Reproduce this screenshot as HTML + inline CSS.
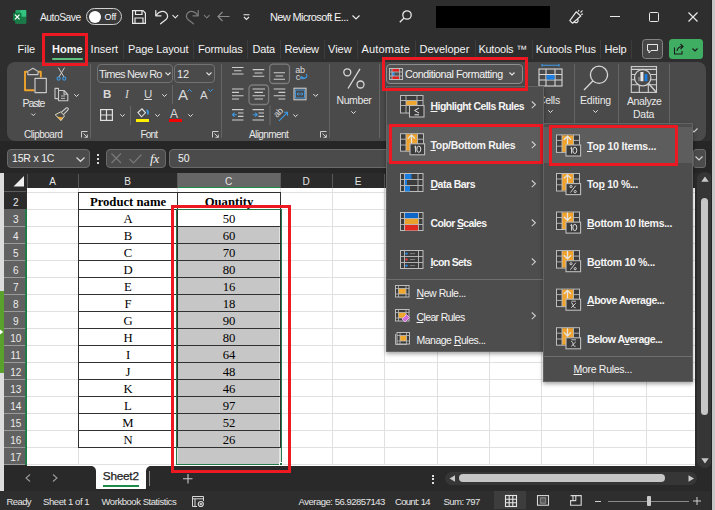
<!DOCTYPE html>
<html><head><meta charset="utf-8">
<style>
*{box-sizing:border-box;margin:0;padding:0}
html,body{width:715px;height:510px;overflow:hidden;background:#2e2e2e;font-family:"Liberation Sans",sans-serif;color:#fff}
.a{position:absolute}
.t{position:absolute;white-space:nowrap;line-height:1}
svg{position:absolute;overflow:visible}
</style></head><body>
<!-- title bar -->
<div id="title" class="a" style="left:0;top:0;width:715px;height:62px;background:#2e2e2e"></div>
<!-- ribbon panel -->
<div id="ribbon" class="a" style="left:7px;top:62px;width:699px;height:79px;background:#4a4a4a;border-radius:8px"></div>
<!-- formula bar -->
<div id="fbar" class="a" style="left:0;top:141px;width:715px;height:32px;background:#262626"></div>
<!-- left strip -->
<div class="a" style="left:0;top:173px;width:4px;height:318px;background:#dcdcdc"></div><div class="a" style="left:0;top:291px;width:4px;height:82px;background:#5aa02c"></div><svg style="left:0;top:329px" width="4" height="6" viewBox="0 0 4 6"><path d="M0 0.5 L3.2 3 L0 5.5Z" fill="#fff"/></svg>
<!-- column headers -->
<div class="a" style="left:4px;top:173px;width:691px;height:15px;background:#2b2b2b"></div>
<!-- grid -->
<div id="grid" class="a" style="left:27px;top:188px;width:668px;height:278px;background:#fff"></div>
<!-- row headers -->
<div class="a" style="left:4px;top:188px;width:22px;height:278px;background:#2b2b2b"></div>
<!-- sheet tab bar -->
<div class="a" style="left:4px;top:466px;width:707px;height:25px;background:#292929"></div><div class="a" style="left:0;top:509px;width:711px;height:1px;background:#4a4a4a"></div>
<!-- status bar -->
<div class="a" style="left:0;top:491px;width:711px;height:19px;background:#2e2e2e"></div>

<!-- TITLEBAR -->
<svg style="left:10px;top:8px" width="20" height="18" viewBox="10 8 20 18">
 <rect x="15.4" y="10" width="10.8" height="13.5" rx="1" fill="#21a366"/>
 <rect x="20.5" y="10" width="5.7" height="6.8" fill="#33c481"/>
 <rect x="15.4" y="16.8" width="10.8" height="6.7" fill="#1b7a48"/>
 <rect x="13" y="12.9" width="8.5" height="8.1" rx="0.8" fill="#107c41"/>
 <path d="M15 14.6 L19.5 19.4 M19.5 14.6 L15 19.4" stroke="#fff" stroke-width="1.3"/>
</svg>
<div class="t" style="left:40px;top:13px;font-size:10.3px;color:#f0f0f0;letter-spacing:-0.5px">AutoSave</div>
<div class="a" style="left:86px;top:8px;width:36px;height:17px;border:1.4px solid #d0d0d0;border-radius:8.5px;background:#3a3a3a"></div>
<div class="a" style="left:88.5px;top:10.8px;width:12px;height:12px;border-radius:6px;background:#fff"></div>
<div class="t" style="left:104.5px;top:12.5px;font-size:9px;color:#fff;letter-spacing:0px">Off</div>
<svg style="left:132px;top:10px" width="14" height="14" viewBox="0 0 14 14" fill="none" stroke="#e8e8e8" stroke-width="1.2">
 <path d="M0.6 0.6 H11 L13.4 3 V13.4 H0.6 Z"/><path d="M3.5 0.6 V4.5 H10 V0.6"/><path d="M3 13.4 V8 H11 V13.4"/>
</svg>
<svg style="left:0;top:0" width="230" height="30" viewBox="0 0 230 30" fill="none" stroke-width="1.25" stroke-linecap="round" stroke-linejoin="round">
 <path d="M155.8 10.6 V15.8 H161" stroke="#e6e6e6"/>
 <path d="M156.2 15.4 C158.6 11.6 163 10.3 165.8 12.6 C168.4 14.8 168 17.6 166 19.6 L160.6 23.8" stroke="#e6e6e6"/>
 <path d="M172.8 15.4 L175.3 17.9 L177.8 15.4" stroke="#e6e6e6" stroke-width="1.1"/>
 <path d="M198.2 10.6 V15.8 H193" stroke="#7c7c7c"/>
 <path d="M197.8 15.4 C195.4 11.6 191 10.3 188.2 12.6 C185.6 14.8 186 17.6 188 19.6 L193.4 23.8" stroke="#7c7c7c"/>
 <path d="M204.3 15.4 L206.8 17.9 L209.3 15.4" stroke="#7c7c7c" stroke-width="1.1"/>
</svg>
<svg style="left:217px;top:11px" width="13" height="11" viewBox="0 0 13 11" fill="none" stroke="#8a8a8a" stroke-width="1.2"><path d="M12.5 5.5 H1 M5.5 1 L1 5.5 L5.5 10"/></svg>
<svg style="left:243px;top:14px" width="7" height="7" viewBox="0 0 7 7" fill="none" stroke="#e8e8e8" stroke-width="1.1"><path d="M0.5 0.8 H6.5 M1 3 L3.5 5.5 L6 3"/></svg>
<div class="t" style="left:270px;top:12px;font-size:11px;color:#f4f4f4;letter-spacing:-0.62px">New Microsoft E...</div>
<svg style="left:352px;top:15px" width="8" height="5" viewBox="0 0 8 5" fill="none" stroke="#e8e8e8" stroke-width="1.2"><path d="M0.5 0.5 L4 4 L7.5 0.5"/></svg>
<svg style="left:399px;top:10px" width="13" height="13" viewBox="0 0 13 13" fill="none" stroke="#e8e8e8" stroke-width="1.3"><circle cx="8" cy="5" r="4.2"/><path d="M5 8 L0.8 12.2"/></svg>
<div class="a" style="left:436px;top:6px;width:114px;height:22px;background:#000"></div>
<svg style="left:560px;top:5px" width="30" height="25" viewBox="560 5 30 25" fill="none" stroke="#e6e6e6" stroke-width="1.2" stroke-linejoin="round" stroke-linecap="round">
 <path d="M569.8 20.6 L576.2 11.8 L580.8 16 L572.6 23.2 Z"/>
 <path d="M574.3 21.9 A1.9 1.9 0 1 0 577.6 19.2"/>
 <path d="M578.4 11.2 L578.9 10.4 M580.8 12.2 L582.2 10.9 M581.6 14.4 L582.6 14"/>
</svg>
<div class="a" style="left:610px;top:16px;width:10px;height:1.2px;background:#e8e8e8"></div>
<div class="a" style="left:649px;top:12px;width:10px;height:10px;border:1.2px solid #e8e8e8;border-radius:1.5px"></div>
<svg style="left:688px;top:12px" width="10" height="10" viewBox="0 0 10 10" fill="none" stroke="#e8e8e8" stroke-width="1.2"><path d="M0.5 0.5 L9.5 9.5 M9.5 0.5 L0.5 9.5"/></svg>

<!-- TABS -->
<div class="t" style="left:17.5px;top:44px;font-size:11px;font-weight:400;color:#f4f4f4;letter-spacing:0px">File</div>
<div class="t" style="left:52px;top:44px;font-size:11px;font-weight:700;color:#f4f4f4;letter-spacing:0px">Home</div>
<div class="t" style="left:90.6px;top:44px;font-size:11px;font-weight:400;color:#f4f4f4;letter-spacing:0px">Insert</div>
<div class="t" style="left:128px;top:44px;font-size:11px;font-weight:400;color:#f4f4f4;letter-spacing:-0.12px">Page Layout</div>
<div class="t" style="left:198px;top:44px;font-size:11px;font-weight:400;color:#f4f4f4;letter-spacing:-0.15px">Formulas</div>
<div class="t" style="left:252.5px;top:44px;font-size:11px;font-weight:400;color:#f4f4f4;letter-spacing:-0.2px">Data</div>
<div class="t" style="left:284.5px;top:44px;font-size:11px;font-weight:400;color:#f4f4f4;letter-spacing:-0.3px">Review</div>
<div class="t" style="left:328px;top:44px;font-size:11px;font-weight:400;color:#f4f4f4;letter-spacing:0px">View</div>
<div class="t" style="left:361.4px;top:44px;font-size:11px;font-weight:400;color:#f4f4f4;letter-spacing:0.2px">Automate</div>
<div class="t" style="left:419.6px;top:44px;font-size:11px;font-weight:400;color:#f4f4f4;letter-spacing:-0.05px">Developer</div>
<div class="t" style="left:478.4px;top:44px;font-size:11px;font-weight:400;color:#f4f4f4;letter-spacing:-0.25px">Kutools &#8482;</div>
<div class="t" style="left:535.7px;top:44px;font-size:11px;font-weight:400;color:#f4f4f4;letter-spacing:-0.08px">Kutools Plus</div>
<div class="t" style="left:604.5px;top:44px;font-size:11px;font-weight:400;color:#f4f4f4;letter-spacing:-0.15px">Help</div>
<div class="a" style="left:52px;top:57.5px;width:31px;height:2px;background:#5ec27f;border-radius:1px"></div>
<div class="a" style="left:123.0px;top:40px;width:1px;height:19px;background:#3c3c3c"></div>
<div class="a" style="left:193.0px;top:40px;width:1px;height:19px;background:#3c3c3c"></div>
<div class="a" style="left:247.0px;top:40px;width:1px;height:19px;background:#3c3c3c"></div>
<div class="a" style="left:279.5px;top:40px;width:1px;height:19px;background:#3c3c3c"></div>
<div class="a" style="left:324.2px;top:40px;width:1px;height:19px;background:#3c3c3c"></div>
<div class="a" style="left:357.0px;top:40px;width:1px;height:19px;background:#3c3c3c"></div>
<div class="a" style="left:415.2px;top:40px;width:1px;height:19px;background:#3c3c3c"></div>
<div class="a" style="left:474.5px;top:40px;width:1px;height:19px;background:#3c3c3c"></div>
<div class="a" style="left:531.5px;top:40px;width:1px;height:19px;background:#3c3c3c"></div>
<div class="a" style="left:599.5px;top:40px;width:1px;height:19px;background:#3c3c3c"></div>
<div class="a" style="left:630.5px;top:40px;width:1px;height:19px;background:#3c3c3c"></div>
<div class="a" style="left:642px;top:39px;width:21px;height:19.5px;border:1.2px solid #858585;border-radius:3.5px;background:#464646"></div>
<svg style="left:647px;top:44px" width="11" height="10" viewBox="0 0 11 10" fill="none" stroke="#e8e8e8" stroke-width="1"><path d="M0.5 0.5 H10.5 V6.5 H4 L2 9 V6.5 H0.5 Z"/></svg>
<div class="a" style="left:669px;top:39px;width:34px;height:19.8px;border-radius:3.5px;background:#3fae62"></div>
<svg style="left:674px;top:43px" width="12" height="12" viewBox="0 0 12 12" fill="none" stroke="#1b1b1b" stroke-width="1.1"><path d="M0.5 4.5 V11 H8 V8"/><path d="M3 8 C3.5 5 5.5 3.5 8.5 3.5 M6.5 1 L9 3.5 L6.5 6"/></svg>
<svg style="left:692px;top:48px" width="6" height="4" viewBox="0 0 6 4" fill="none" stroke="#1b1b1b" stroke-width="1.2"><path d="M0.5 0.5 L3 3 L5.5 0.5"/></svg>
<!-- red box Home -->
<div class="a" style="left:42px;top:33px;width:46px;height:33px;border:3px solid #ec1822"></div>


<!-- RIBBON CLIPBOARD -->
<svg style="left:0;top:60px" width="90" height="70" viewBox="0 60 90 70" fill="none" stroke-linejoin="round">
 <path d="M27.6 71.8 H25 V90.2 H34.5" stroke="#f0a22a" stroke-width="1.9"/>
 <path d="M38.2 71.8 H40.8 V77.5" stroke="#f0a22a" stroke-width="1.9"/>
 <path d="M27.8 74.6 V71.4 L32.9 68.2 L38 71.4 V74.6 Z" stroke="#c8c8c8" stroke-width="1.1"/>
 <rect x="35" y="78.3" width="11.3" height="14.3" stroke="#c8c8c8" stroke-width="1.2"/>
 <path d="M58.3 67.6 L64 77 M64.6 67.6 L58.9 77" stroke="#d0d0d0" stroke-width="1"/>
 <circle cx="58.6" cy="78.6" r="1.6" stroke="#3c9be8" stroke-width="1.1"/><circle cx="64.3" cy="78.6" r="1.6" stroke="#3c9be8" stroke-width="1.1"/>
 <path d="M58.5 90.5 V88.4 H55 V98.6 H58.5" stroke="#c8c8c8" stroke-width="1.1"/>
 <path d="M58.5 90.5 H64 L67.8 94.3 V100.8 H58.5 Z M64 90.5 V94.3 H67.8" stroke="#c8c8c8" stroke-width="1.1"/>
 <path d="M61 96 H65 M61 98.4 H65" stroke="#c8c8c8" stroke-width="0.9"/>
 <path d="M56.8 116.4 L63.2 117.6 L61 120.4 Z" fill="#f0a22a" stroke="none"/>
 <path d="M55.2 114.8 L60.6 112 L64.5 115.8 L61 120.6 Z" stroke="#e2dcc0" stroke-width="1"/>
 <path d="M61.2 112.4 L66.2 108 Q67.4 107.3 68.1 108.3 Q68.6 109.3 67.8 110.1 L63.4 114.6" stroke="#d0d0d0" stroke-width="1.1"/>
 <path d="M31.3 113.6 L33.3 115.6 L35.3 113.6" stroke="#e0e0e0" stroke-width="1"/>
</svg>
<div class="t" style="left:22.5px;top:98px;font-size:10.5px;color:#e8e8e8;letter-spacing:-1px">Paste</div>
<svg style="left:74px;top:94px" width="5" height="3" viewBox="0 0 5 3" fill="none" stroke="#e0e0e0" stroke-width="1"><path d="M0.3 0.3 L2.5 2.5 L4.7 0.3"/></svg>
<div class="t" style="left:24px;top:130px;font-size:10px;color:#e8e8e8;letter-spacing:-0.5px">Clipboard</div>
<svg style="left:81px;top:131px" width="7" height="7" viewBox="0 0 7 7" fill="none" stroke="#cfcfcf" stroke-width="1"><path d="M0.5 6.5 V0.5 H6.5 M2.5 2.5 L6.3 6.3 M3.5 6.3 H6.3 V3.5"/></svg>
<div class="a" style="left:90px;top:64px;width:1px;height:74px;background:#646464"></div>

<!-- RIBBON FONT -->
<div class="a" style="left:97px;top:64px;width:76px;height:19px;border:1px solid #727272;border-radius:4px"></div>
<div class="t" style="left:99px;top:69px;font-size:11px;color:#e8e8e8;letter-spacing:-0.75px">Times New Ro</div>
<svg style="left:165px;top:72px" width="6" height="4" viewBox="0 0 6 4" fill="none" stroke="#e0e0e0" stroke-width="1.1"><path d="M0.5 0.5 L3 3 L5.5 0.5"/></svg>
<div class="a" style="left:174px;top:64px;width:41px;height:19px;border:1px solid #727272;border-radius:4px"></div>
<div class="t" style="left:177px;top:69px;font-size:11px;color:#e8e8e8">12</div>
<svg style="left:206px;top:72px" width="6" height="4" viewBox="0 0 6 4" fill="none" stroke="#e0e0e0" stroke-width="1.1"><path d="M0.5 0.5 L3 3 L5.5 0.5"/></svg>
<div class="t" style="left:103px;top:89px;font-size:11.5px;font-weight:bold;color:#d8d8d8">B</div>
<div class="t" style="left:125px;top:89px;font-size:11.5px;font-style:italic;color:#d8d8d8;font-family:'Liberation Serif'">I</div>
<div class="t" style="left:144px;top:89px;font-size:11.5px;color:#d8d8d8">U</div>
<div class="a" style="left:144px;top:98.5px;width:8px;height:1.2px;background:#d8d8d8"></div>
<svg style="left:162px;top:94px" width="5" height="3" viewBox="0 0 5 3" fill="none" stroke="#e0e0e0" stroke-width="1"><path d="M0.3 0.3 L2.5 2.5 L4.7 0.3"/></svg>
<div class="a" style="left:172px;top:85px;width:1px;height:19px;background:#666"></div>
<div class="t" style="left:178px;top:87px;font-size:15px;color:#d8d8d8">A</div>
<svg style="left:187px;top:89px" width="5" height="3" viewBox="0 0 5 3" fill="none" stroke="#3c9be8" stroke-width="1"><path d="M0.3 2.7 L2.5 0.5 L4.7 2.7"/></svg>
<div class="t" style="left:200px;top:90px;font-size:11.5px;color:#d8d8d8">A</div>
<svg style="left:208px;top:89px" width="5" height="3" viewBox="0 0 5 3" fill="none" stroke="#3c9be8" stroke-width="1"><path d="M0.3 0.3 L2.5 2.5 L4.7 0.3"/></svg>
<svg style="left:100px;top:109px" width="13" height="12" viewBox="0 0 13 12" fill="none" stroke="#e0e0e0" stroke-width="1.2"><rect x="0.6" y="0.6" width="11.8" height="10.8"/><path d="M6.5 0.6 V11.4 M0.6 6 H12.4"/></svg>
<svg style="left:120px;top:114px" width="5" height="3" viewBox="0 0 5 3" fill="none" stroke="#e0e0e0" stroke-width="1"><path d="M0.3 0.3 L2.5 2.5 L4.7 0.3"/></svg>
<div class="a" style="left:130px;top:106px;width:1px;height:19px;background:#666"></div>
<svg style="left:137px;top:108px" width="12" height="10" viewBox="0 0 12 10" fill="none" stroke-width="1.1">
 <path d="M1 4.5 L5 0.8 L8.5 4.8 L4.5 8.8 Z" stroke="#e0e0e0"/><path d="M9.5 2 C11 3 11.5 5 10.5 6.5" stroke="#3c9be8" stroke-width="1.6"/>
</svg>
<div class="a" style="left:136px;top:118.5px;width:13px;height:3.5px;background:#ffef00"></div>
<svg style="left:155px;top:114px" width="5" height="3" viewBox="0 0 5 3" fill="none" stroke="#e0e0e0" stroke-width="1"><path d="M0.3 0.3 L2.5 2.5 L4.7 0.3"/></svg>
<div class="t" style="left:170px;top:108px;font-size:12px;color:#d8d8d8">A</div>
<div class="a" style="left:169px;top:118.5px;width:13px;height:3.5px;background:#f00000"></div>
<svg style="left:188px;top:114px" width="5" height="3" viewBox="0 0 5 3" fill="none" stroke="#e0e0e0" stroke-width="1"><path d="M0.3 0.3 L2.5 2.5 L4.7 0.3"/></svg>
<div class="t" style="left:140.5px;top:130px;font-size:10px;color:#e8e8e8;letter-spacing:-0.8px">Font</div>
<svg style="left:212px;top:131px" width="7" height="7" viewBox="0 0 7 7" fill="none" stroke="#cfcfcf" stroke-width="1"><path d="M0.5 6.5 V0.5 H6.5 M2.5 2.5 L6.3 6.3 M3.5 6.3 H6.3 V3.5"/></svg>
<div class="a" style="left:221px;top:64px;width:1px;height:74px;background:#646464"></div>


<!-- RIBBON ALIGNMENT -->
<svg style="left:0;top:0" width="715" height="145" viewBox="0 0 715 145" fill="none" stroke="#cdcdcd" stroke-width="1.1">
 <path d="M232 67.5 H243.5 M234 70.8 H241.5 M232 74 H243.5"/>
 <path d="M252.7 69.6 H264.3 M254.5 73 H262.5 M252.7 76.3 H264.3"/>
 <rect x="269.7" y="64.2" width="19.8" height="19.3" rx="3.5" stroke="#7c7c7c" stroke-width="1.3"/>
 <path d="M273.7 72.7 H285 M275.5 76 H283.2 M273.7 79.3 H285"/>
 <path d="M232 89 H243.5 M232 92.4 H239 M232 95.7 H243.5 M232 99 H239"/>
 <rect x="249" y="85" width="19.6" height="19.5" rx="3.5" stroke="#7c7c7c" stroke-width="1.3"/>
 <path d="M252.5 89 H265 M254.5 92.4 H263 M252.5 95.7 H265 M254.5 99 H263"/>
 <path d="M273.7 89 H285.3 M278.5 92.4 H285.3 M273.7 95.7 H285.3 M278.5 99 H285.3"/>
 <rect x="294" y="88.2" width="12" height="11.6" stroke="#d8d8d8" stroke-width="1"/>
 <rect x="295.5" y="90" width="9" height="8" stroke="#3c9be8" stroke-width="0.9"/>
 <path d="M297 94 H303 M298.5 92.5 L297 94 L298.5 95.5 M301.5 92.5 L303 94 L301.5 95.5" stroke="#3c9be8" stroke-width="0.9"/>
 <path d="M232 109.6 H243.5 M238 113 H243.5 M238 116.4 H243.5 M232 120 H243.5"/>
 <path d="M237 114.7 H232.5 M234.5 112.7 L232.5 114.7 L234.5 116.7" stroke="#3c9be8" stroke-width="1.1"/>
 <path d="M252.5 109.6 H264 M258.5 113 H264 M258.5 116.4 H264 M252.5 120 H264"/>
 <path d="M252.7 114.7 H257.2 M255.2 112.7 L257.2 114.7 L255.2 116.7" stroke="#3c9be8" stroke-width="1.1"/>
 <path d="M270 105.5 V125.3" stroke="#6a6a6a" stroke-width="1"/>
 <path d="M279 120.8 L287.5 112.3 M284 112.3 H287.5 V115.8" stroke="#3c9be8" stroke-width="1.1"/>
 <path d="M293.3 114.5 L295.5 116.7 L297.7 114.5" stroke="#e8e8e8" stroke-width="1"/>
 <path d="M313.3 94 L315.7 96.4 L318.1 94" stroke="#e8e8e8" stroke-width="1"/>
 <path d="M301 76.5 C301.5 79 304 79.5 306.5 77 C307.2 76 307 74.5 306 74 M301 76.5 L300.8 79.2 M301 76.5 L303.5 77.7" stroke="#3c9be8" stroke-width="1.1"/>
</svg>
<div class="t" style="left:295.3px;top:66px;font-size:9px;color:#d8d8d8;letter-spacing:-0.4px">ab</div>
<div class="t" style="left:295.8px;top:72.5px;font-size:9px;color:#d8d8d8">c</div>
<div class="t" style="left:272px;top:112.5px;font-size:9px;color:#d8d8d8;transform:rotate(-45deg);transform-origin:left top;letter-spacing:-0.4px">ab</div>
<div class="t" style="left:249px;top:130px;font-size:10px;color:#e8e8e8;letter-spacing:-0.6px">Alignment</div>
<svg style="left:320px;top:131px" width="7" height="7" viewBox="0 0 7 7" fill="none" stroke="#cfcfcf" stroke-width="1"><path d="M0.5 6.5 V0.5 H6.5 M2.5 2.5 L6.3 6.3 M3.5 6.3 H6.3 V3.5"/></svg>
<div class="a" style="left:329px;top:64px;width:1px;height:74px;background:#646464"></div>

<!-- NUMBER -->
<svg style="left:343px;top:68px" width="22" height="21" viewBox="0 0 22 21" fill="none" stroke="#d8d8d8" stroke-width="1.3">
 <circle cx="4.3" cy="4.3" r="3.5"/><circle cx="17.5" cy="16.5" r="3.5"/><path d="M17 0.8 L5 20.5"/>
</svg>
<div class="t" style="left:336.5px;top:95px;font-size:10.5px;color:#e8e8e8;letter-spacing:-0.4px">Number</div>
<svg style="left:351px;top:111px" width="5" height="3" viewBox="0 0 5 3" fill="none" stroke="#e0e0e0" stroke-width="1"><path d="M0.3 0.3 L2.5 2.5 L4.7 0.3"/></svg>
<div class="a" style="left:379px;top:64px;width:1px;height:74px;background:#646464"></div>

<!-- CELLS -->
<svg style="left:538px;top:64px" width="25" height="23" viewBox="0 0 25 23" fill="none" stroke-width="1.1">
 <path d="M4 1.3 H21 M4 0 V2.6 M21 0 V2.6" stroke="#3c9be8"/>
 <rect x="1" y="5" width="23" height="17" stroke="#d8d8d8"/>
 <path d="M1 10.5 H24 M1 16 H24 M8 5 V22 M17 5 V22" stroke="#d8d8d8"/>
 <rect x="8.5" y="11" width="8" height="4.5" fill="#1a7de0" stroke="none"/>
</svg>
<div class="t" style="left:538px;top:95px;font-size:10.5px;color:#e8e8e8;letter-spacing:-0.3px">Cells</div>
<svg style="left:548px;top:110px" width="5" height="3" viewBox="0 0 5 3" fill="none" stroke="#e0e0e0" stroke-width="1"><path d="M0.3 0.3 L2.5 2.5 L4.7 0.3"/></svg>
<div class="a" style="left:574px;top:64px;width:1px;height:74px;background:#646464"></div>
<!-- EDITING -->
<svg style="left:583px;top:65px" width="27" height="26" viewBox="0 0 27 26" fill="none" stroke="#d8d8d8" stroke-width="1.3">
 <circle cx="16" cy="9.8" r="8.6"/><path d="M9.8 16 L1 25"/>
</svg>
<div class="t" style="left:580px;top:95px;font-size:10.5px;color:#e8e8e8;letter-spacing:-0.15px">Editing</div>
<svg style="left:593px;top:110px" width="5" height="3" viewBox="0 0 5 3" fill="none" stroke="#e0e0e0" stroke-width="1"><path d="M0.3 0.3 L2.5 2.5 L4.7 0.3"/></svg>
<div class="a" style="left:618px;top:64px;width:1px;height:74px;background:#646464"></div>
<!-- ANALYZE -->
<svg style="left:620px;top:60px" width="45" height="40" viewBox="620 60 45 40" fill="none" stroke="#d0d0d0" stroke-width="1.1">
 <rect x="631.3" y="66.6" width="25.2" height="25.8"/>
 <path d="M631.3 69.4 H656.5 M631.3 84.8 H656.5 M639.3 84.8 V92.4 M648.3 84.8 V92.4 M631.3 74.5 H635 M631.3 79.8 H635 M650.5 74.5 H656.5 M650.5 79.8 H656.5"/>
 <circle cx="642.7" cy="77.7" r="8.2" fill="#4a4a4a" stroke-width="1.3"/>
 <path d="M648.6 83.6 L656.3 92.2" stroke-width="1.5"/>
 <rect x="640.4" y="72" width="3" height="9.2" fill="#e8e8e8" stroke="none"/>
 <rect x="644.6" y="74" width="2.8" height="7.2" fill="#1a7de0" stroke="none"/>
 <rect x="638" y="77" width="2" height="4.2" fill="#7a7a7a" stroke="none"/>
</svg>
<div class="t" style="left:627px;top:96px;font-size:10.5px;color:#e8e8e8;letter-spacing:-0.4px">Analyze</div>
<div class="t" style="left:633px;top:109px;font-size:10.5px;color:#e8e8e8;letter-spacing:-0.25px">Data</div>
<div class="a" style="left:669px;top:64px;width:1px;height:74px;background:#646464"></div>
<svg style="left:690px;top:127.5px" width="8" height="5" viewBox="0 0 8 5" fill="none" stroke="#d8d8d8" stroke-width="1.1"><path d="M0.5 0.5 L4 4 L7.5 0.5"/></svg>


<!-- FORMULA BAR -->
<div class="a" style="left:7px;top:149px;width:83px;height:19px;border:1px solid #6a6a6a;border-radius:4px;background:#4b4b4b"></div>
<div class="t" style="left:12px;top:153px;font-size:10.5px;color:#f2f2f2;letter-spacing:-0.2px">15R x 1C</div>
<svg style="left:76px;top:157px" width="9" height="5" viewBox="0 0 9 5" fill="none" stroke="#d8d8d8" stroke-width="1.2"><path d="M0.5 0.5 L4.5 4.3 L8.5 0.5"/></svg>
<div class="a" style="left:97px;top:154px;width:2px;height:2px;background:#d8d8d8"></div>
<div class="a" style="left:97px;top:158px;width:2px;height:2px;background:#d8d8d8"></div>
<div class="a" style="left:97px;top:162px;width:2px;height:2px;background:#d8d8d8"></div>
<div class="a" style="left:106px;top:149px;width:60px;height:19px;border:1px solid #6a6a6a;border-radius:4px;background:#4b4b4b"></div>
<svg style="left:111px;top:153px" width="11" height="11" viewBox="0 0 11 11" fill="none" stroke="#7a7a7a" stroke-width="1.1"><path d="M0.5 0.5 L10 10 M10 0.5 L0.5 10"/></svg>
<svg style="left:129px;top:154px" width="13" height="10" viewBox="0 0 13 10" fill="none" stroke="#7a7a7a" stroke-width="1.1"><path d="M0.5 5 L4.5 9 L12.5 0.5"/></svg>
<div class="t" style="left:150px;top:152px;font-size:13px;font-style:italic;color:#f2f2f2;font-family:'Liberation Serif'">fx</div>
<div class="a" style="left:169px;top:149px;width:525px;height:19px;border:1px solid #6a6a6a;border-radius:4px;background:#4b4b4b"></div>
<div class="t" style="left:178px;top:153px;font-size:10.5px;color:#f2f2f2">50</div>
<div class="a" style="left:693px;top:149px;width:13px;height:19px;border:1px solid #6a6a6a;border-radius:3px;background:#4b4b4b"></div>
<svg style="left:695px;top:156px" width="8" height="5" viewBox="0 0 8 5" fill="none" stroke="#d8d8d8" stroke-width="1.1"><path d="M0.5 0.5 L4 4 L7.5 0.5"/></svg>
<svg style="left:0;top:0" width="715" height="510" viewBox="0 0 715 510">
<path d="M78.5 188 V465" stroke="#e0e0e0" stroke-width="1"/>
<path d="M177.5 188 V465" stroke="#e0e0e0" stroke-width="1"/>
<path d="M280.5 188 V465" stroke="#e0e0e0" stroke-width="1"/>
<path d="M332.5 188 V465" stroke="#e0e0e0" stroke-width="1"/>
<path d="M384.5 188 V465" stroke="#e0e0e0" stroke-width="1"/>
<path d="M437.5 188 V465" stroke="#e0e0e0" stroke-width="1"/>
<path d="M489.5 188 V465" stroke="#e0e0e0" stroke-width="1"/>
<path d="M541.5 188 V465" stroke="#e0e0e0" stroke-width="1"/>
<path d="M593.5 188 V465" stroke="#e0e0e0" stroke-width="1"/>
<path d="M646.5 188 V465" stroke="#e0e0e0" stroke-width="1"/>
<path d="M698.5 188 V465" stroke="#e0e0e0" stroke-width="1"/>
<path d="M27 192.5 H695" stroke="#e0e0e0" stroke-width="1"/>
<path d="M27 209.5 H695" stroke="#e0e0e0" stroke-width="1"/>
<path d="M27 226.5 H695" stroke="#e0e0e0" stroke-width="1"/>
<path d="M27 243.5 H695" stroke="#e0e0e0" stroke-width="1"/>
<path d="M27 260.5 H695" stroke="#e0e0e0" stroke-width="1"/>
<path d="M27 277.5 H695" stroke="#e0e0e0" stroke-width="1"/>
<path d="M27 294.5 H695" stroke="#e0e0e0" stroke-width="1"/>
<path d="M27 311.5 H695" stroke="#e0e0e0" stroke-width="1"/>
<path d="M27 328.5 H695" stroke="#e0e0e0" stroke-width="1"/>
<path d="M27 345.5 H695" stroke="#e0e0e0" stroke-width="1"/>
<path d="M27 362.5 H695" stroke="#e0e0e0" stroke-width="1"/>
<path d="M27 379.5 H695" stroke="#e0e0e0" stroke-width="1"/>
<path d="M27 396.5 H695" stroke="#e0e0e0" stroke-width="1"/>
<path d="M27 413.5 H695" stroke="#e0e0e0" stroke-width="1"/>
<path d="M27 430.5 H695" stroke="#e0e0e0" stroke-width="1"/>
<path d="M27 447.5 H695" stroke="#e0e0e0" stroke-width="1"/>
<path d="M27 464.5 H695" stroke="#e0e0e0" stroke-width="1"/>
<rect x="178" y="226" width="101.5" height="238" fill="#c6c6c6"/>
<path d="M78 192.5 H281" stroke="#303030" stroke-width="1"/>
<path d="M78 209.5 H281" stroke="#303030" stroke-width="1"/>
<path d="M78 226.5 H281" stroke="#303030" stroke-width="1"/>
<path d="M78 243.5 H281" stroke="#303030" stroke-width="1"/>
<path d="M78 260.5 H281" stroke="#303030" stroke-width="1"/>
<path d="M78 277.5 H281" stroke="#303030" stroke-width="1"/>
<path d="M78 294.5 H281" stroke="#303030" stroke-width="1"/>
<path d="M78 311.5 H281" stroke="#303030" stroke-width="1"/>
<path d="M78 328.5 H281" stroke="#303030" stroke-width="1"/>
<path d="M78 345.5 H281" stroke="#303030" stroke-width="1"/>
<path d="M78 362.5 H281" stroke="#303030" stroke-width="1"/>
<path d="M78 379.5 H281" stroke="#303030" stroke-width="1"/>
<path d="M78 396.5 H281" stroke="#303030" stroke-width="1"/>
<path d="M78 413.5 H281" stroke="#303030" stroke-width="1"/>
<path d="M78 430.5 H281" stroke="#303030" stroke-width="1"/>
<path d="M78 447.5 H281" stroke="#303030" stroke-width="1"/>
<path d="M78.5 192 V448 M177.5 192 V448 M280.5 192 V448" stroke="#303030" stroke-width="1"/>
</svg>
<!-- HEADERS/CELLS -->
<div class="a" style="left:177px;top:173px;width:104px;height:15px;background:#666666"></div>
<div class="a" style="left:177px;top:187px;width:104px;height:1px;background:#1e8a4c"></div>
<div class="a" style="left:27px;top:174px;width:1px;height:14px;background:#585858"></div>
<div class="t" style="left:27px;top:177px;width:51px;text-align:center;font-size:10px;color:#e6e6e6">A</div>
<div class="a" style="left:78px;top:174px;width:1px;height:14px;background:#585858"></div>
<div class="t" style="left:78px;top:177px;width:99px;text-align:center;font-size:10px;color:#e6e6e6">B</div>
<div class="a" style="left:177px;top:174px;width:1px;height:14px;background:#585858"></div>
<div class="t" style="left:177px;top:177px;width:103px;text-align:center;font-size:10px;color:#e6e6e6">C</div>
<div class="a" style="left:280px;top:174px;width:1px;height:14px;background:#585858"></div>
<div class="t" style="left:280px;top:177px;width:52px;text-align:center;font-size:10px;color:#e6e6e6">D</div>
<div class="a" style="left:332px;top:174px;width:1px;height:14px;background:#585858"></div>
<div class="t" style="left:332px;top:177px;width:52px;text-align:center;font-size:10px;color:#e6e6e6">E</div>
<div class="a" style="left:384px;top:174px;width:1px;height:14px;background:#585858"></div>
<div class="t" style="left:384px;top:177px;width:53px;text-align:center;font-size:10px;color:#e6e6e6">F</div>
<div class="a" style="left:437px;top:174px;width:1px;height:14px;background:#585858"></div>
<div class="t" style="left:437px;top:177px;width:52px;text-align:center;font-size:10px;color:#e6e6e6">G</div>
<div class="a" style="left:489px;top:174px;width:1px;height:14px;background:#585858"></div>
<div class="t" style="left:489px;top:177px;width:52px;text-align:center;font-size:10px;color:#e6e6e6">H</div>
<div class="a" style="left:541px;top:174px;width:1px;height:14px;background:#585858"></div>
<div class="t" style="left:541px;top:177px;width:52px;text-align:center;font-size:10px;color:#e6e6e6">I</div>
<div class="a" style="left:593px;top:174px;width:1px;height:14px;background:#585858"></div>
<div class="t" style="left:593px;top:177px;width:53px;text-align:center;font-size:10px;color:#e6e6e6">J</div>
<div class="a" style="left:646px;top:174px;width:1px;height:14px;background:#585858"></div>
<div class="t" style="left:646px;top:177px;width:52px;text-align:center;font-size:10px;color:#e6e6e6">K</div>
<svg style="left:13px;top:176px" width="12" height="11" viewBox="0 0 12 11"><path d="M11 0 V10.5 H0.5 Z" fill="#f0f0f0"/></svg>
<div class="a" style="left:4px;top:191px;width:22px;height:1px;background:#5d5d5d"></div>
<div class="a" style="left:4px;top:192px;width:22px;height:17px;background:#2b2b2b"></div>
<div class="t" style="left:4.7px;top:198px;width:22px;text-align:center;font-size:10px;color:#ececec">2</div>
<div class="a" style="left:4px;top:209px;width:22px;height:17px;background:#616161"></div>
<div class="t" style="left:4.7px;top:215px;width:22px;text-align:center;font-size:10px;color:#ececec">3</div>
<div class="a" style="left:4px;top:226px;width:22px;height:17px;background:#616161"></div>
<div class="t" style="left:4.7px;top:232px;width:22px;text-align:center;font-size:10px;color:#ececec">4</div>
<div class="a" style="left:4px;top:243px;width:22px;height:17px;background:#616161"></div>
<div class="t" style="left:4.7px;top:249px;width:22px;text-align:center;font-size:10px;color:#ececec">5</div>
<div class="a" style="left:4px;top:260px;width:22px;height:17px;background:#616161"></div>
<div class="t" style="left:4.7px;top:266px;width:22px;text-align:center;font-size:10px;color:#ececec">6</div>
<div class="a" style="left:4px;top:277px;width:22px;height:17px;background:#616161"></div>
<div class="t" style="left:4.7px;top:283px;width:22px;text-align:center;font-size:10px;color:#ececec">7</div>
<div class="a" style="left:4px;top:294px;width:22px;height:17px;background:#616161"></div>
<div class="t" style="left:4.7px;top:300px;width:22px;text-align:center;font-size:10px;color:#ececec">8</div>
<div class="a" style="left:4px;top:311px;width:22px;height:17px;background:#616161"></div>
<div class="t" style="left:4.7px;top:317px;width:22px;text-align:center;font-size:10px;color:#ececec">9</div>
<div class="a" style="left:4px;top:328px;width:22px;height:17px;background:#616161"></div>
<div class="t" style="left:4.7px;top:334px;width:22px;text-align:center;font-size:10px;color:#ececec">10</div>
<div class="a" style="left:4px;top:345px;width:22px;height:17px;background:#616161"></div>
<div class="t" style="left:4.7px;top:351px;width:22px;text-align:center;font-size:10px;color:#ececec">11</div>
<div class="a" style="left:4px;top:362px;width:22px;height:17px;background:#616161"></div>
<div class="t" style="left:4.7px;top:368px;width:22px;text-align:center;font-size:10px;color:#ececec">12</div>
<div class="a" style="left:4px;top:379px;width:22px;height:17px;background:#616161"></div>
<div class="t" style="left:4.7px;top:385px;width:22px;text-align:center;font-size:10px;color:#ececec">13</div>
<div class="a" style="left:4px;top:396px;width:22px;height:17px;background:#616161"></div>
<div class="t" style="left:4.7px;top:402px;width:22px;text-align:center;font-size:10px;color:#ececec">14</div>
<div class="a" style="left:4px;top:413px;width:22px;height:17px;background:#616161"></div>
<div class="t" style="left:4.7px;top:419px;width:22px;text-align:center;font-size:10px;color:#ececec">15</div>
<div class="a" style="left:4px;top:430px;width:22px;height:17px;background:#616161"></div>
<div class="t" style="left:4.7px;top:436px;width:22px;text-align:center;font-size:10px;color:#ececec">16</div>
<div class="a" style="left:4px;top:447px;width:22px;height:17px;background:#616161"></div>
<div class="t" style="left:4.7px;top:453px;width:22px;text-align:center;font-size:10px;color:#ececec">17</div>
<div class="a" style="left:4px;top:226px;width:22px;height:1px;background:#9a9a9a"></div>
<div class="a" style="left:4px;top:243px;width:22px;height:1px;background:#9a9a9a"></div>
<div class="a" style="left:4px;top:260px;width:22px;height:1px;background:#9a9a9a"></div>
<div class="a" style="left:4px;top:277px;width:22px;height:1px;background:#9a9a9a"></div>
<div class="a" style="left:4px;top:294px;width:22px;height:1px;background:#9a9a9a"></div>
<div class="a" style="left:4px;top:311px;width:22px;height:1px;background:#9a9a9a"></div>
<div class="a" style="left:4px;top:328px;width:22px;height:1px;background:#9a9a9a"></div>
<div class="a" style="left:4px;top:345px;width:22px;height:1px;background:#9a9a9a"></div>
<div class="a" style="left:4px;top:362px;width:22px;height:1px;background:#9a9a9a"></div>
<div class="a" style="left:4px;top:379px;width:22px;height:1px;background:#9a9a9a"></div>
<div class="a" style="left:4px;top:396px;width:22px;height:1px;background:#9a9a9a"></div>
<div class="a" style="left:4px;top:413px;width:22px;height:1px;background:#9a9a9a"></div>
<div class="a" style="left:4px;top:430px;width:22px;height:1px;background:#9a9a9a"></div>
<div class="a" style="left:4px;top:447px;width:22px;height:1px;background:#9a9a9a"></div>
<div class="a" style="left:4px;top:464px;width:22px;height:1px;background:#9a9a9a"></div>
<div class="a" style="left:25.3px;top:209px;width:1.7px;height:256px;background:#217a48"></div>
<div class="t" style="left:78px;top:196px;width:100px;text-align:center;font-family:'Liberation Serif';font-weight:bold;font-size:12.7px;color:#000">Product name</div>
<div class="t" style="left:177px;top:196px;width:104px;text-align:center;font-family:'Liberation Serif';font-weight:bold;font-size:12.7px;color:#000">Quantity</div>
<div class="t" style="left:78px;top:213px;width:100px;text-align:center;font-family:'Liberation Serif';font-size:12.7px;color:#000">A</div>
<div class="t" style="left:177px;top:213px;width:104px;text-align:center;font-family:'Liberation Serif';font-size:12.7px;color:#000">50</div>
<div class="t" style="left:78px;top:230px;width:100px;text-align:center;font-family:'Liberation Serif';font-size:12.7px;color:#000">B</div>
<div class="t" style="left:177px;top:230px;width:104px;text-align:center;font-family:'Liberation Serif';font-size:12.7px;color:#000">60</div>
<div class="t" style="left:78px;top:247px;width:100px;text-align:center;font-family:'Liberation Serif';font-size:12.7px;color:#000">C</div>
<div class="t" style="left:177px;top:247px;width:104px;text-align:center;font-family:'Liberation Serif';font-size:12.7px;color:#000">70</div>
<div class="t" style="left:78px;top:264px;width:100px;text-align:center;font-family:'Liberation Serif';font-size:12.7px;color:#000">D</div>
<div class="t" style="left:177px;top:264px;width:104px;text-align:center;font-family:'Liberation Serif';font-size:12.7px;color:#000">80</div>
<div class="t" style="left:78px;top:281px;width:100px;text-align:center;font-family:'Liberation Serif';font-size:12.7px;color:#000">E</div>
<div class="t" style="left:177px;top:281px;width:104px;text-align:center;font-family:'Liberation Serif';font-size:12.7px;color:#000">16</div>
<div class="t" style="left:78px;top:298px;width:100px;text-align:center;font-family:'Liberation Serif';font-size:12.7px;color:#000">F</div>
<div class="t" style="left:177px;top:298px;width:104px;text-align:center;font-family:'Liberation Serif';font-size:12.7px;color:#000">18</div>
<div class="t" style="left:78px;top:315px;width:100px;text-align:center;font-family:'Liberation Serif';font-size:12.7px;color:#000">G</div>
<div class="t" style="left:177px;top:315px;width:104px;text-align:center;font-family:'Liberation Serif';font-size:12.7px;color:#000">90</div>
<div class="t" style="left:78px;top:332px;width:100px;text-align:center;font-family:'Liberation Serif';font-size:12.7px;color:#000">H</div>
<div class="t" style="left:177px;top:332px;width:104px;text-align:center;font-family:'Liberation Serif';font-size:12.7px;color:#000">80</div>
<div class="t" style="left:78px;top:349px;width:100px;text-align:center;font-family:'Liberation Serif';font-size:12.7px;color:#000">I</div>
<div class="t" style="left:177px;top:349px;width:104px;text-align:center;font-family:'Liberation Serif';font-size:12.7px;color:#000">64</div>
<div class="t" style="left:78px;top:366px;width:100px;text-align:center;font-family:'Liberation Serif';font-size:12.7px;color:#000">J</div>
<div class="t" style="left:177px;top:366px;width:104px;text-align:center;font-family:'Liberation Serif';font-size:12.7px;color:#000">48</div>
<div class="t" style="left:78px;top:383px;width:100px;text-align:center;font-family:'Liberation Serif';font-size:12.7px;color:#000">K</div>
<div class="t" style="left:177px;top:383px;width:104px;text-align:center;font-family:'Liberation Serif';font-size:12.7px;color:#000">46</div>
<div class="t" style="left:78px;top:400px;width:100px;text-align:center;font-family:'Liberation Serif';font-size:12.7px;color:#000">L</div>
<div class="t" style="left:177px;top:400px;width:104px;text-align:center;font-family:'Liberation Serif';font-size:12.7px;color:#000">97</div>
<div class="t" style="left:78px;top:417px;width:100px;text-align:center;font-family:'Liberation Serif';font-size:12.7px;color:#000">M</div>
<div class="t" style="left:177px;top:417px;width:104px;text-align:center;font-family:'Liberation Serif';font-size:12.7px;color:#000">52</div>
<div class="t" style="left:78px;top:434px;width:100px;text-align:center;font-family:'Liberation Serif';font-size:12.7px;color:#000">N</div>
<div class="t" style="left:177px;top:434px;width:104px;text-align:center;font-family:'Liberation Serif';font-size:12.7px;color:#000">26</div>
<div class="a" style="left:176px;top:208.5px;width:106px;height:256px;border:1.7px solid #217a48"></div>
<div class="a" style="left:279px;top:462px;width:4px;height:4px;background:#1e7a45;border:1px solid #fff"></div>
<div class="a" style="left:171px;top:205.3px;width:120px;height:267.4px;border:3.3px solid #ec1822"></div>
<!-- BOTTOM -->
<div class="a" style="left:695px;top:173px;width:16px;height:293px;background:#2b2b2b"></div>
<div class="a" style="left:696.5px;top:172px;width:15px;height:296px;background:#363636;border-radius:7.5px"></div>
<svg style="left:700.5px;top:176px" width="8" height="6" viewBox="0 0 8 6"><path d="M0.3 5.7 L4 0.5 L7.7 5.7Z" fill="#c8c8c8"/></svg>
<div class="a" style="left:700.7px;top:198px;width:7.5px;height:217px;background:#c6c6c6;border-radius:4px"></div>
<svg style="left:700.5px;top:458px" width="8" height="6" viewBox="0 0 8 6"><path d="M0.3 0.3 L4 5.5 L7.7 0.3Z" fill="#c8c8c8"/></svg>
<div class="a" style="left:92px;top:466px;width:58px;height:23px;background:#fff;border-radius:0 0 5px 5px"></div>
<div class="a" style="left:88px;top:466px;width:8px;height:23px;background:#292929;border-radius:0 5px 0 0"></div>
<div class="a" style="left:145.5px;top:466px;width:8px;height:23px;background:#292929;border-radius:5px 0 0 0"></div>
<div class="t" style="left:96px;top:470.5px;width:49.5px;text-align:center;font-size:11.8px;color:#1e1e1e;letter-spacing:-0.25px;-webkit-text-stroke:0.25px #1e1e1e">Sheet2</div>
<div class="a" style="left:103px;top:484.8px;width:36px;height:1.8px;background:#1e8a4c"></div>
<div class="a" style="left:148.5px;top:471px;width:1px;height:15px;background:#8a8a8a"></div>
<svg style="left:183px;top:473.5px" width="10" height="10" viewBox="0 0 10 10" fill="none" stroke="#c8c8c8" stroke-width="1.1"><path d="M5 0 V9.5 M0 4.7 H9.5"/></svg>
<svg style="left:25px;top:474px" width="6" height="8" viewBox="0 0 6 8" fill="none" stroke="#9a9a9a" stroke-width="1.1"><path d="M5 0.5 L1 4 L5 7.5"/></svg>
<svg style="left:52px;top:474px" width="6" height="8" viewBox="0 0 6 8" fill="none" stroke="#9a9a9a" stroke-width="1.1"><path d="M1 0.5 L5 4 L1 7.5"/></svg>
<div class="a" style="left:431.5px;top:474.5px;width:2px;height:2px;background:#e0e0e0"></div>
<div class="a" style="left:431.5px;top:478px;width:2px;height:2px;background:#e0e0e0"></div>
<div class="a" style="left:431.5px;top:481.5px;width:2px;height:2px;background:#e0e0e0"></div>
<div class="a" style="left:445px;top:472px;width:252px;height:13px;background:#363636;border-radius:6.5px"></div>
<svg style="left:448.5px;top:475px" width="7" height="7" viewBox="0 0 7 7"><path d="M6 0.3 V6.7 L0.5 3.5Z" fill="#c8c8c8"/></svg>
<svg style="left:687.5px;top:475px" width="7" height="7" viewBox="0 0 7 7"><path d="M0.5 0.3 V6.7 L6 3.5Z" fill="#c8c8c8"/></svg>
<div class="a" style="left:458.5px;top:474.3px;width:206px;height:7.6px;background:#c6c6c6;border-radius:4px"></div>
<div class="t" style="left:6.5px;top:497px;font-size:9.5px;color:#e6e6e6;letter-spacing:-0.6px">Ready</div>
<div class="t" style="left:43px;top:497px;font-size:9.5px;color:#e6e6e6;letter-spacing:-0.42px">Sheet 1 of 1</div>
<div class="t" style="left:101.5px;top:497px;font-size:9.5px;color:#e6e6e6;letter-spacing:-0.45px">Workbook Statistics</div>
<svg style="left:192px;top:496px" width="13" height="11" viewBox="0 0 13 11" fill="none" stroke="#d8d8d8" stroke-width="1">
 <path d="M5 10.5 H0.5 V0.5 H11.5 V5"/><path d="M0.5 2.8 H11.5 M3 2.8 V10.5"/><circle cx="8.8" cy="8" r="2.5" stroke-width="1.2"/><circle cx="8.8" cy="8" r="0.8" fill="#d8d8d8"/>
</svg>
<div class="t" style="left:298.5px;top:497px;font-size:9.5px;color:#e6e6e6;letter-spacing:-0.48px">Average: 56.92857143</div>
<div class="t" style="left:395px;top:497px;font-size:9.5px;color:#e6e6e6;letter-spacing:-0.7px">Count: 14</div>
<div class="t" style="left:443.5px;top:497px;font-size:9.5px;color:#e6e6e6;letter-spacing:-0.55px">Sum: 797</div>
<div class="a" style="left:494px;top:491px;width:32px;height:18px;background:#3d3d3d"></div>
<svg style="left:504.5px;top:495px" width="12" height="12" viewBox="0 0 12 12" fill="none" stroke="#e6e6e6" stroke-width="1.1">
 <rect x="0.5" y="0.5" width="11" height="11"/><path d="M4.2 0.5 V11.5 M7.8 0.5 V11.5 M0.5 4.2 H11.5 M0.5 7.8 H11.5"/></svg>
<svg style="left:530px;top:490px" width="60" height="20" viewBox="530 490 60 20" fill="none" stroke="#d8d8d8" stroke-width="1.1">
 <rect x="537.5" y="495.6" width="11" height="9.6"/><rect x="540.3" y="497.8" width="5.4" height="5.4" stroke="#8a8a8a" fill="#5a5a5a"/>
 <path d="M570.6 495.6 H581.2 V505.2 H570.6 V500.6 H576.2 M573 495.6 V500.6 M575.8 495.6 V500.6"/>
</svg>
<div class="a" style="left:595px;top:501px;width:6px;height:1px;background:#cfcfcf"></div>
<div class="a" style="left:607.5px;top:500.7px;width:81.5px;height:1px;background:#8a8a8a"></div>
<div class="a" style="left:646.5px;top:496px;width:4.3px;height:9.5px;background:#c8c8c8;border-radius:1px"></div>
<svg style="left:692.5px;top:497px" width="8" height="8" viewBox="0 0 8 8" fill="none" stroke="#cfcfcf" stroke-width="1"><path d="M4 0 V8 M0 4 H8"/></svg>
<!-- MENUS -->
<div class="a" style="left:386px;top:64px;width:137px;height:20px;border:1.2px solid #8e8e8e;border-radius:4px;background:#525252"></div>
<svg style="left:389px;top:68px" width="14" height="12" viewBox="0 0 14 12" fill="none">
 <rect x="3" y="0.5" width="7" height="3.2" fill="#e81c1c"/><rect x="3" y="8.3" width="7" height="3.2" fill="#e81c1c"/><rect x="3" y="4" width="2.5" height="4" fill="#2b8be6"/>
 <rect x="0.5" y="0.5" width="13" height="11" stroke="#bdbdbd" stroke-width="1"/>
 <path d="M0.5 4 H13.5 M0.5 8 H13.5 M3 0.5 V11.5 M10.5 0.5 V11.5" stroke="#bdbdbd" stroke-width="0.8"/>
</svg>
<div class="t" style="left:405px;top:69px;font-size:10.7px;color:#f4f4f4;letter-spacing:-0.45px">Conditional Formatting</div>
<svg style="left:509px;top:72px" width="6" height="4" viewBox="0 0 6 4" fill="none" stroke="#e8e8e8" stroke-width="1.1"><path d="M0.5 0.5 L3 3 L5.5 0.5"/></svg>
<div class="a" style="left:386px;top:86px;width:158px;height:266px;background:#4d4d4d;border:1px solid #646464;box-shadow:0 2px 4px rgba(0,0,0,.35)"></div>
<div class="a" style="left:387px;top:125px;width:156px;height:37px;background:#5d5d5d"></div>
<svg style="left:400px;top:95px" width="26" height="23" viewBox="0 0 26 23" fill="none">
 <rect x="0.5" y="0.5" width="22.5" height="17.5" fill="#3c3c3c" stroke="#bdbdbd" stroke-width="1"/>
 <rect x="6" y="6" width="11" height="4" fill="#f0a72e"/>
 <path d="M0.5 5.5 H23 M0.5 10.5 H23 M6 0.5 V18 M17 0.5 V18" stroke="#bdbdbd" stroke-width="0.9"/>
 <rect x="9.5" y="10.5" width="14.5" height="11.5" fill="#3c3c3c" stroke="#bdbdbd" stroke-width="1.1"/>
 <path d="M19 13 L14.5 15.5 L19 18 M14.5 19.8 H19" stroke="#e8e8e8" stroke-width="1"/>
</svg>
<svg style="left:400px;top:173px" width="24" height="20" viewBox="0 0 24 20" fill="none">
 <rect x="0.5" y="0.5" width="22.5" height="18" fill="#3c3c3c" stroke="#bdbdbd" stroke-width="1"/>
 <rect x="4.5" y="1" width="7" height="5.5" fill="#1a7de0"/><rect x="4.5" y="6.5" width="2.5" height="6" fill="#1a7de0"/><rect x="4.5" y="12.5" width="5.5" height="6" fill="#1a7de0"/>
 <path d="M0.5 6.5 H23 M0.5 12.5 H23 M4.5 0.5 V19 M18 0.5 V19" stroke="#bdbdbd" stroke-width="0.9"/>
</svg>
<svg style="left:400px;top:212px" width="24" height="20" viewBox="0 0 24 20" fill="none">
 <rect x="0.5" y="0.5" width="22.5" height="18" fill="#3c3c3c" stroke="#bdbdbd" stroke-width="1"/>
 <rect x="4.5" y="1" width="14" height="5.5" fill="#0f66c9"/><rect x="4.5" y="6.5" width="14" height="6" fill="#eba12e"/><rect x="4.5" y="12.5" width="14" height="6" fill="#e02a1f"/>
 <path d="M0.5 6.5 H23 M0.5 12.5 H23 M4.5 0.5 V19 M18.5 0.5 V19" stroke="#bdbdbd" stroke-width="0.9"/>
</svg>
<svg style="left:400px;top:250px" width="24" height="20" viewBox="0 0 24 20" fill="none">
 <rect x="0.5" y="0.5" width="22.5" height="18" fill="#3c3c3c" stroke="#bdbdbd" stroke-width="1"/>
 <path d="M0.5 6.5 H23 M0.5 12.5 H23 M4.5 0.5 V19 M18.5 0.5 V19" stroke="#bdbdbd" stroke-width="0.9"/>
 <circle cx="6.5" cy="3.6" r="1.2" fill="#2b8be6"/><circle cx="6.5" cy="9.5" r="1.2" fill="#e03a3a"/><circle cx="6.5" cy="15.6" r="1.2" fill="#2b8be6"/>
 <path d="M10 3.6 H15 M10 9.5 H15 M10 15.6 H15" stroke="#8a8a8a" stroke-width="0.9"/>
</svg>
<div class="t" style="left:430.5px;top:101px;font-size:10.5px;font-weight:bold;color:#f4f4f4;letter-spacing:-0.55px"><u>H</u>ighlight Cells Rules</div>
<div class="t" style="left:430.5px;top:140px;font-size:10.5px;font-weight:bold;color:#f4f4f4;letter-spacing:-0.3px"><u>T</u>op/Bottom Rules</div>
<div class="t" style="left:430.5px;top:179px;font-size:10.5px;font-weight:bold;color:#f4f4f4;letter-spacing:-0.5px"><u>D</u>ata Bars</div>
<div class="t" style="left:430.5px;top:218px;font-size:10.5px;font-weight:bold;color:#f4f4f4;letter-spacing:-0.65px">Color <u>S</u>cales</div>
<div class="t" style="left:430.5px;top:257px;font-size:10.5px;font-weight:bold;color:#f4f4f4;letter-spacing:-0.65px"><u>I</u>con Sets</div>
<svg style="left:531px;top:101.0px" width="6" height="8" viewBox="0 0 6 8" fill="none" stroke="#cfcfcf" stroke-width="1.1"><path d="M0.8 0.5 L4.4 3.8 L0.8 7.1"/></svg>
<svg style="left:531px;top:140.5px" width="6" height="8" viewBox="0 0 6 8" fill="none" stroke="#cfcfcf" stroke-width="1.1"><path d="M0.8 0.5 L4.4 3.8 L0.8 7.1"/></svg>
<svg style="left:531px;top:179.5px" width="6" height="8" viewBox="0 0 6 8" fill="none" stroke="#cfcfcf" stroke-width="1.1"><path d="M0.8 0.5 L4.4 3.8 L0.8 7.1"/></svg>
<svg style="left:531px;top:218.5px" width="6" height="8" viewBox="0 0 6 8" fill="none" stroke="#cfcfcf" stroke-width="1.1"><path d="M0.8 0.5 L4.4 3.8 L0.8 7.1"/></svg>
<svg style="left:531px;top:257.5px" width="6" height="8" viewBox="0 0 6 8" fill="none" stroke="#cfcfcf" stroke-width="1.1"><path d="M0.8 0.5 L4.4 3.8 L0.8 7.1"/></svg>
<div class="a" style="left:387px;top:279px;width:156px;height:1px;background:#6e6e6e"></div>
<svg style="left:395px;top:285px" width="15" height="13" viewBox="0 0 15 13" fill="none">
 <rect x="0.5" y="0.5" width="13.5" height="11.5" fill="#3c3c3c" stroke="#bdbdbd" stroke-width="1"/>
 <rect x="3.5" y="3.5" width="7.5" height="5.5" fill="#f0a72e"/>
 <path d="M0.5 3.5 H14 M0.5 9 H14 M3.5 0.5 V12 M11 0.5 V12" stroke="#bdbdbd" stroke-width="0.8"/>
</svg>
<svg style="left:395px;top:309px" width="16" height="14" viewBox="0 0 16 14" fill="none">
 <rect x="0.5" y="0.5" width="13.5" height="11.5" fill="#3c3c3c" stroke="#bdbdbd" stroke-width="1"/>
 <rect x="3.5" y="3.5" width="7.5" height="5.5" fill="#f0a72e"/>
 <path d="M0.5 3.5 H14 M0.5 9 H14 M3.5 0.5 V12 M11 0.5 V12" stroke="#bdbdbd" stroke-width="0.8"/>
 <path d="M7 10 L11.5 5.5 L14.5 8.5 L10 13 Z" fill="#d06fd8" stroke="#f0c0f0" stroke-width="0.8"/>
</svg>
<svg style="left:395px;top:332px" width="15" height="13" viewBox="0 0 15 13" fill="none">
 <rect x="2" y="0.5" width="12.5" height="11.5" fill="#3c3c3c" stroke="#bdbdbd" stroke-width="1"/>
 <path d="M0.5 2 V12.5 H12" stroke="#bdbdbd" stroke-width="0.9"/>
 <rect x="5" y="3.5" width="6.5" height="5.5" fill="#f0a72e"/>
 <path d="M2 3.5 H14.5 M2 9 H14.5 M5 0.5 V12 M11.5 0.5 V12" stroke="#bdbdbd" stroke-width="0.8"/>
</svg>
<div class="t" style="left:416.5px;top:288px;font-size:10.5px;font-weight:normal;color:#f4f4f4;letter-spacing:-0.45px"><u>N</u>ew Rule...</div>
<div class="t" style="left:416.5px;top:311.5px;font-size:10.5px;font-weight:normal;color:#f4f4f4;letter-spacing:-0.62px"><u>C</u>lear Rules</div>
<div class="t" style="left:416.5px;top:335px;font-size:10.5px;font-weight:normal;color:#f4f4f4;letter-spacing:-0.5px">Manage <u>R</u>ules...</div>
<svg style="left:531px;top:312.0px" width="6" height="8" viewBox="0 0 6 8" fill="none" stroke="#cfcfcf" stroke-width="1.1"><path d="M0.8 0.5 L4.4 3.8 L0.8 7.1"/></svg>
<div class="a" style="left:382px;top:56.5px;width:146px;height:34px;border:3.3px solid #ec1822"></div>
<div class="a" style="left:389px;top:123.5px;width:154px;height:40px;border:3.3px solid #ec1822"></div>
<div class="a" style="left:543px;top:123px;width:150px;height:259px;background:#4d4d4d;border:1px solid #646464;box-shadow:0 2px 4px rgba(0,0,0,.35)"></div>
<div class="a" style="left:544px;top:127px;width:148px;height:36px;background:#5d5d5d"></div>
<div class="t" style="left:587px;top:141px;font-size:10.5px;font-weight:bold;color:#f4f4f4;letter-spacing:-0.2px"><u>T</u>op 10 Items...</div>
<div class="t" style="left:587px;top:179px;font-size:10.5px;font-weight:bold;color:#f4f4f4;letter-spacing:-0.3px">To<u>p</u> 10 %...</div>
<div class="t" style="left:587px;top:218px;font-size:10.5px;font-weight:bold;color:#f4f4f4;letter-spacing:-0.3px"><u>B</u>ottom 10 Items...</div>
<div class="t" style="left:587px;top:257px;font-size:10.5px;font-weight:bold;color:#f4f4f4;letter-spacing:-0.32px">B<u>o</u>ttom 10 %...</div>
<div class="t" style="left:587px;top:295px;font-size:10.5px;font-weight:bold;color:#f4f4f4;letter-spacing:-0.45px"><u>A</u>bove Average...</div>
<div class="t" style="left:587px;top:334px;font-size:10.5px;font-weight:bold;color:#f4f4f4;letter-spacing:-0.5px">Below A<u>v</u>erage...</div>
<svg style="left:400px;top:133px" width="27" height="24" viewBox="0 -0.20 27 24" fill="none">
 <rect x="0.5" y="0.5" width="23" height="17.5" fill="#3c3c3c" stroke="#bdbdbd" stroke-width="1"/>
 <rect x="6" y="1" width="11.5" height="16.5" fill="#f0a22a"/>
 <path d="M6 0.5 V18 M17.5 0.5 V18 M0.5 6 H6 M0.5 11.8 H6 M17.5 6 H23.5 M17.5 11.8 H23.5" stroke="#bdbdbd" stroke-width="0.9"/>
 <path d="M11.5 2 V10 M7.9 5.4 L11.5 1.8 L15.1 5.4" stroke="#e4e4e4" stroke-width="1.3"/>
 <rect x="10" y="10.6" width="14.6" height="11" fill="#3c3c3c" stroke="#bdbdbd" stroke-width="1.1"/>
 <path d="M14.3 14 L15.6 12.8 V19.2" stroke="#e0e0e0" stroke-width="1"/><ellipse cx="18.8" cy="16" rx="2" ry="3.1" stroke="#e0e0e0" stroke-width="1"/>
</svg>
<svg style="left:556px;top:134px" width="27" height="24" viewBox="0 -0.40 27 24" fill="none">
 <rect x="0.5" y="0.5" width="23" height="17.5" fill="#3c3c3c" stroke="#bdbdbd" stroke-width="1"/>
 <rect x="6" y="1" width="11.5" height="16.5" fill="#f0a22a"/>
 <path d="M6 0.5 V18 M17.5 0.5 V18 M0.5 6 H6 M0.5 11.8 H6 M17.5 6 H23.5 M17.5 11.8 H23.5" stroke="#bdbdbd" stroke-width="0.9"/>
 <path d="M11.5 2 V10 M7.9 5.4 L11.5 1.8 L15.1 5.4" stroke="#e4e4e4" stroke-width="1.3"/>
 <rect x="10" y="10.6" width="14.6" height="11" fill="#3c3c3c" stroke="#bdbdbd" stroke-width="1.1"/>
 <path d="M14.3 14 L15.6 12.8 V19.2" stroke="#e0e0e0" stroke-width="1"/><ellipse cx="18.8" cy="16" rx="2" ry="3.1" stroke="#e0e0e0" stroke-width="1"/>
</svg>
<svg style="left:556px;top:173px" width="27" height="24" viewBox="0 0.00 27 24" fill="none">
 <rect x="0.5" y="0.5" width="23" height="17.5" fill="#3c3c3c" stroke="#bdbdbd" stroke-width="1"/>
 <rect x="6" y="1" width="11.5" height="16.5" fill="#f0a22a"/>
 <path d="M6 0.5 V18 M17.5 0.5 V18 M0.5 6 H6 M0.5 11.8 H6 M17.5 6 H23.5 M17.5 11.8 H23.5" stroke="#bdbdbd" stroke-width="0.9"/>
 <path d="M11.5 2 V10 M7.9 5.4 L11.5 1.8 L15.1 5.4" stroke="#e4e4e4" stroke-width="1.3"/>
 <rect x="10" y="10.6" width="14.6" height="11" fill="#3c3c3c" stroke="#bdbdbd" stroke-width="1.1"/>
 <circle cx="15" cy="13.6" r="1.1" stroke="#e0e0e0" stroke-width="0.9"/><circle cx="19.2" cy="18.6" r="1.1" stroke="#e0e0e0" stroke-width="0.9"/><path d="M19.8 12.6 L14.4 19.6" stroke="#e0e0e0" stroke-width="0.9"/>
</svg>
<svg style="left:556px;top:211px" width="27" height="24" viewBox="0 -0.50 27 24" fill="none">
 <rect x="0.5" y="0.5" width="23" height="17.5" fill="#3c3c3c" stroke="#bdbdbd" stroke-width="1"/>
 <rect x="6" y="1" width="11.5" height="16.5" fill="#f0a22a"/>
 <path d="M6 0.5 V18 M17.5 0.5 V18 M0.5 6 H6 M0.5 11.8 H6 M17.5 6 H23.5 M17.5 11.8 H23.5" stroke="#bdbdbd" stroke-width="0.9"/>
 <path d="M11.5 1 V8.8 M7.9 5.2 L11.5 8.8 L15.1 5.2" stroke="#e4e4e4" stroke-width="1.3"/>
 <rect x="10" y="10.6" width="14.6" height="11" fill="#3c3c3c" stroke="#bdbdbd" stroke-width="1.1"/>
 <path d="M14.3 14 L15.6 12.8 V19.2" stroke="#e0e0e0" stroke-width="1"/><ellipse cx="18.8" cy="16" rx="2" ry="3.1" stroke="#e0e0e0" stroke-width="1"/>
</svg>
<svg style="left:556px;top:250px" width="27" height="24" viewBox="0 -0.10 27 24" fill="none">
 <rect x="0.5" y="0.5" width="23" height="17.5" fill="#3c3c3c" stroke="#bdbdbd" stroke-width="1"/>
 <rect x="6" y="1" width="11.5" height="16.5" fill="#f0a22a"/>
 <path d="M6 0.5 V18 M17.5 0.5 V18 M0.5 6 H6 M0.5 11.8 H6 M17.5 6 H23.5 M17.5 11.8 H23.5" stroke="#bdbdbd" stroke-width="0.9"/>
 <path d="M11.5 1 V8.8 M7.9 5.2 L11.5 8.8 L15.1 5.2" stroke="#e4e4e4" stroke-width="1.3"/>
 <rect x="10" y="10.6" width="14.6" height="11" fill="#3c3c3c" stroke="#bdbdbd" stroke-width="1.1"/>
 <circle cx="15" cy="13.6" r="1.1" stroke="#e0e0e0" stroke-width="0.9"/><circle cx="19.2" cy="18.6" r="1.1" stroke="#e0e0e0" stroke-width="0.9"/><path d="M19.8 12.6 L14.4 19.6" stroke="#e0e0e0" stroke-width="0.9"/>
</svg>
<svg style="left:556px;top:288px" width="27" height="24" viewBox="0 -0.60 27 24" fill="none">
 <rect x="0.5" y="0.5" width="23" height="17.5" fill="#3c3c3c" stroke="#bdbdbd" stroke-width="1"/>
 <rect x="6" y="1" width="11.5" height="16.5" fill="#f0a22a"/>
 <path d="M6 0.5 V18 M17.5 0.5 V18 M0.5 6 H6 M0.5 11.8 H6 M17.5 6 H23.5 M17.5 11.8 H23.5" stroke="#bdbdbd" stroke-width="0.9"/>
 <path d="M11.5 2 V10 M7.9 5.4 L11.5 1.8 L15.1 5.4" stroke="#e4e4e4" stroke-width="1.3"/>
 <rect x="10" y="10.6" width="14.6" height="11" fill="#3c3c3c" stroke="#bdbdbd" stroke-width="1.1"/>
 <path d="M15.3 12.6 H20" stroke="#e0e0e0" stroke-width="0.8"/><path d="M15 14.4 C16 14 16.5 14.5 17 16.5 C17.5 18.5 18 19.4 19.6 19" stroke="#e0e0e0" stroke-width="0.9"/><path d="M19.8 14.6 L15.2 19.2" stroke="#e0e0e0" stroke-width="0.9"/>
</svg>
<svg style="left:556px;top:327px" width="27" height="24" viewBox="0 -0.20 27 24" fill="none">
 <rect x="0.5" y="0.5" width="23" height="17.5" fill="#3c3c3c" stroke="#bdbdbd" stroke-width="1"/>
 <rect x="6" y="1" width="11.5" height="16.5" fill="#f0a22a"/>
 <path d="M6 0.5 V18 M17.5 0.5 V18 M0.5 6 H6 M0.5 11.8 H6 M17.5 6 H23.5 M17.5 11.8 H23.5" stroke="#bdbdbd" stroke-width="0.9"/>
 <path d="M11.5 1 V8.8 M7.9 5.2 L11.5 8.8 L15.1 5.2" stroke="#e4e4e4" stroke-width="1.3"/>
 <rect x="10" y="10.6" width="14.6" height="11" fill="#3c3c3c" stroke="#bdbdbd" stroke-width="1.1"/>
 <path d="M15.3 12.6 H20" stroke="#e0e0e0" stroke-width="0.8"/><path d="M15 14.4 C16 14 16.5 14.5 17 16.5 C17.5 18.5 18 19.4 19.6 19" stroke="#e0e0e0" stroke-width="0.9"/><path d="M19.8 14.6 L15.2 19.2" stroke="#e0e0e0" stroke-width="0.9"/>
</svg>
<div class="a" style="left:544px;top:356px;width:148px;height:1px;background:#6e6e6e"></div>
<div class="t" style="left:573.5px;top:364px;font-size:10.5px;font-weight:normal;color:#f4f4f4;letter-spacing:-0.3px"><u>M</u>ore Rules...</div>
<div class="a" style="left:549px;top:125px;width:129px;height:41px;border:3.3px solid #ec1822"></div>
<!-- right strip -->
<div class="a" style="left:710.5px;top:0;width:1px;height:510px;background:#242424"></div><div class="a" style="left:711.5px;top:0;width:3.5px;height:510px;background:#c6c6c6"></div>
</body></html>
